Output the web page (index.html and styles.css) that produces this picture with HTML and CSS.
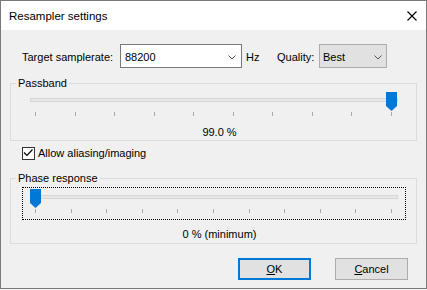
FILE: index.html
```html
<!DOCTYPE html>
<html lang="en">
<head>
    <meta charset="UTF-8">
    <title>Resampler settings</title>
    <link rel="stylesheet" href="styles.css">
</head>
<body>
    <div class="window">
        <div class="titlebar">
            <span class="title">Resampler settings</span>
            <svg class="close" width="10" height="10" viewBox="0 0 10 10">
                <path d="M0.5 0.5 L9.5 9.5 M9.5 0.5 L0.5 9.5" stroke="#000" stroke-width="1.1" fill="none"/>
            </svg>
        </div>

        <div class="content">
            <!-- 出力レート -->
            <div class="rate-row">
                <span class="label-rate">Target samplerate:</span>
                <div class="combo combo-rate">
                    <span>88200</span>
                    <svg class="chevron" width="8" height="5" viewBox="0 0 8 5">
                        <path d="M0.5 0.5 L4 4 L7.5 0.5" stroke="#555" stroke-width="1" fill="none"/>
                    </svg>
                </div>
                <span class="unit">Hz</span>
                <span class="label-quality">Quality:</span>
                <div class="combo combo-quality">
                    <span>Best</span>
                    <svg class="chevron" width="8" height="5" viewBox="0 0 8 5">
                        <path d="M0.5 0.5 L4 4 L7.5 0.5" stroke="#555" stroke-width="1" fill="none"/>
                    </svg>
                </div>
            </div>

            <!-- 通過帯域 -->
            <fieldset class="group group-passband">
                <legend>Passband</legend>
                <div class="slider">
                    <div class="track"></div>
                    <div class="ticks">
                        <i></i><i></i><i></i><i></i><i></i><i></i><i></i><i></i><i></i><i></i>
                    </div>
                    <svg class="thumb" style="left: 356px" width="11" height="19" viewBox="0 0 11 19">
                        <path d="M0 0 H11 V14 L5.5 19 L0 14 Z" fill="#0078d7"/>
                    </svg>
                </div>
                <div class="value">99.0 %</div>
            </fieldset>

            <label class="check-row">
                <span class="checkbox">
                    <svg width="11" height="11" viewBox="0 0 11 11">
                        <path d="M1 4.5 L4 7.5 L9.5 1.5" stroke="#000" stroke-width="1.2" fill="none"/>
                    </svg>
                </span>
                Allow aliasing/imaging
            </label>

            <!-- 位相特性 -->
            <fieldset class="group group-phase">
                <legend>Phase response</legend>
                <div class="focus">
                    <div class="slider">
                        <div class="track"></div>
                        <div class="ticks">
                            <i></i><i></i><i></i><i></i><i></i><i></i><i></i><i></i><i></i><i></i><i></i>
                        </div>
                        <svg class="thumb" style="left: 0px" width="11" height="19" viewBox="0 0 11 19">
                            <path d="M0 0 H11 V14 L5.5 19 L0 14 Z" fill="#0078d7"/>
                        </svg>
                    </div>
                </div>
                <div class="value">0 % (minimum)</div>
            </fieldset>

            <div class="buttons">
                <button class="btn btn-default"><u>O</u>K</button>
                <button class="btn"><u>C</u>ancel</button>
            </div>
        </div>
    </div>
</body>
</html>
```

FILE: styles.css
```css
/* 基本スタイル */
body {
    margin: 0;
    background: #f0f0f0;
    font-family: "Liberation Sans", Arial, sans-serif;
    font-size: 11px;
    line-height: 14px;
    color: #000;
}

.window {
    width: 427px;
    height: 289px;
    box-sizing: border-box;
    border: 1px solid #7a7a7a;
    background: #f0f0f0;
    display: flex;
    flex-direction: column;
}

/* タイトルバー */
.titlebar {
    height: 29px;
    flex: none;
    background: #fff;
    display: flex;
    align-items: center;
    justify-content: space-between;
    padding: 0 9px 0 8px;
}

.title {
    font-size: 11.5px;
}

.content {
    flex: 1;
    padding: 14px 9px 0;
}

/* 上段 */
.rate-row {
    display: flex;
    align-items: baseline;
    margin-left: 12px;
    height: 24px;
}

.label-rate { width: 98px; }
.unit { width: 31px; margin-left: 4px; }
.label-quality { width: 42px; }

.combo {
    box-sizing: border-box;
    height: 24px;
    border: 1px solid #7a7a7a;
    background: #fff;
    display: flex;
    align-items: flex-start;
    justify-content: space-between;
    padding: 5px 5px 3px 4px;
}

.combo-rate { width: 122px; }

.combo-quality {
    width: 68px;
    background: #e1e1e1;
    border-color: #adadad;
    padding-left: 3px;
    padding-right: 4px;
}

.chevron {
    margin-top: 5px;
}

/* グループボックス */
.group {
    margin: 0;
    min-width: 0;
    border: 1px solid #dcdcdc;
}

.group legend {
    padding: 0 2px;
    line-height: 14px;
}

.group-passband {
    margin-top: 8px;
    padding: 2px 5px 1px;
}

.group-phase {
    margin-top: 11px;
    padding: 2px 5px 2px;
}

/* スライダー */
.slider {
    position: relative;
    width: 368px;
    padding-top: 6px;
}

.group-passband .slider {
    margin-left: 14px;
}

.track {
    height: 4px;
    box-sizing: border-box;
    border: 1px solid #d6d6d6;
    background: #e7e7e7;
}

.ticks {
    display: flex;
    justify-content: space-between;
    margin-top: 10px;
    height: 4px;
    padding: 0 6px 0 5px;
}

.ticks i {
    width: 1px;
    background: #a8a8a8;
}

.thumb {
    position: absolute;
    top: 0;
    display: block;
}

.focus {
    margin-left: 6px;
    width: 384px;
    box-sizing: border-box;
    border: 1px dotted #000;
    padding: 1px 7px 6px;
}

.value {
    text-align: center;
    padding-left: 12px;
}

.group-passband .value { margin-top: 9px; }
.group-phase .value { margin-top: 7px; }

/* チェックボックス */
.check-row {
    display: flex;
    align-items: flex-start;
    margin: 5px 0 0 12px;
    height: 14px;
}

.checkbox {
    width: 13px;
    height: 13px;
    box-sizing: border-box;
    border: 1px solid #333;
    background: #fff;
    margin: 1px 3px 0 0;
    display: flex;
}

/* ボタン */
.buttons {
    display: flex;
    justify-content: flex-end;
    gap: 24px;
    margin-top: 14px;
    padding-right: 9px;
}

.btn {
    width: 73px;
    height: 22px;
    box-sizing: border-box;
    padding: 0;
    background: #e1e1e1;
    border: 1px solid #adadad;
    font: inherit;
    color: #000;
}

.btn-default {
    border: 2px solid #0078d7;
}
```
